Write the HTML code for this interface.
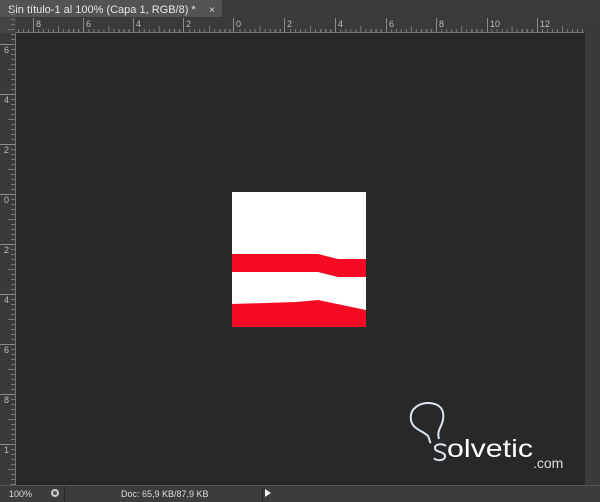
<!DOCTYPE html><html><head><style>body{margin:0;width:600px;height:502px;overflow:hidden;background:#282828;font-family:"Liberation Sans",sans-serif}</style></head><body>
<svg width="600" height="502" xmlns="http://www.w3.org/2000/svg" style="position:absolute;left:0;top:0">
<rect width="600" height="502" fill="#282828"/>
<rect x="0" y="0" width="600" height="17" fill="#3b3b3b"/>
<rect x="0" y="0" width="222" height="17" fill="#535353"/>
<text x="8" y="13" font-size="11" fill="#e6e6e6">Sin título-1 al 100% (Capa 1, RGB/8) *</text>
<text x="209" y="13" font-size="10" fill="#ddd">×</text>
<rect x="0" y="17" width="600" height="16" fill="#3a3a3a"/>
<rect x="0" y="17" width="16" height="468" fill="#3a3a3a"/>
<rect x="0" y="17" width="16" height="16" fill="#444"/>
<rect x="585" y="17" width="15" height="468" fill="#3a3a3a"/>
<path d="M16 32.5H584" stroke="#777"/>
<path d="M15.5 33V485" stroke="#777"/>
<g stroke="#8a8a8a" stroke-width="1">
<path d="M33.5 18v15M83.5 18v15M133.5 18v15M183.5 18v15M233.5 18v15M284.5 18v15M335.5 18v15M386.5 18v15M436.5 18v15M487.5 18v15M537.5 18v15"/>
<path d="M0 44.5h15M0 94.5h15M0 144.5h15M0 194.5h15M0 244.5h15M0 294.5h15M0 344.5h15M0 394.5h15M0 444.5h15"/>
</g>
<g stroke="#777" stroke-width="1">
<path id="tk" d="M18.5 29v4M23.5 29v4M28.5 29v4M38.5 29v4M43.5 29v4M48.5 29v4M53.5 29v4M58.5 26v7M63.5 29v4M68.5 29v4M73.5 29v4M78.5 29v4"/>
<use href="#tk" x="50.4"/><use href="#tk" x="100.8"/><use href="#tk" x="151.2"/><use href="#tk" x="201.6"/><use href="#tk" x="252"/><use href="#tk" x="302.4"/><use href="#tk" x="352.8"/><use href="#tk" x="403.2"/><use href="#tk" x="453.6"/><use href="#tk" x="504"/>
<path id="vk" d="M11 49.5h4M11 54.5h4M11 59.5h4M11 64.5h4M8 69.5h7M11 74.5h4M11 79.5h4M11 84.5h4M11 89.5h4"/>
<use href="#vk" y="-40"/><use href="#vk" y="50"/><use href="#vk" y="100"/><use href="#vk" y="150"/><use href="#vk" y="200"/><use href="#vk" y="250"/><use href="#vk" y="300"/><use href="#vk" y="350"/><use href="#vk" y="400"/>
</g>
<g font-size="9" fill="#bbb">
<text x="36" y="27">8</text><text x="86" y="27">6</text><text x="136" y="27">4</text><text x="186" y="27">2</text><text x="236" y="27">0</text><text x="287" y="27">2</text><text x="338" y="27">4</text><text x="389" y="27">6</text><text x="439" y="27">8</text><text x="490" y="27">10</text><text x="540" y="27">12</text>
<text x="4" y="53">6</text><text x="4" y="103">4</text><text x="4" y="153">2</text><text x="4" y="203">0</text><text x="4" y="253">2</text><text x="4" y="303">4</text><text x="4" y="353">6</text><text x="4" y="403">8</text><text x="4" y="453">1</text>
</g>
<rect x="232" y="192" width="134" height="135" fill="#fff"/>
<path d="M232 254L318 254L338 259L366 259L366 277L338 277L318 272L232 272Z" fill="#f50a24"/>
<path d="M232 304L296 302L318 300L366 310L366 327L232 327Z" fill="#f50a24"/>
<g fill="none" stroke="#d8e4f0" stroke-width="2">
<path d="M416 407c-7 5-7 16 0 21 4 3 9 5 12 8 2 3 1 6 3 7M416 407c7-6 20-5 25 1 4 6 2 14-1 20-2 4-2 8-1 11"/>
<path d="M446 446c-4-3-11-2-11 2 0 5 11 3 10 9-1 4-9 4-11 1"/>
</g>
<text x="447" y="457" font-size="25" fill="#fff" textLength="86" lengthAdjust="spacingAndGlyphs">olvetic</text>
<text x="533" y="468" font-size="14" fill="#ddd">.com</text>
<rect x="0" y="485" width="600" height="17" fill="#3c3c3c"/>
<path d="M0 485.5H600" stroke="#555"/>
<text x="9" y="497" font-size="9" fill="#ddd">100%</text>
<circle cx="55" cy="493" r="4" fill="#ccc"/><circle cx="55" cy="493" r="2" fill="#555"/>
<path d="M64.5 486v16M262.5 486v16" stroke="#2a2a2a"/>
<text x="121" y="497" font-size="9" fill="#ddd">Doc: 65,9 KB/87,9 KB</text>
<path d="M265 489l6 4-6 4z" fill="#eee"/>
</svg>
</body></html>
